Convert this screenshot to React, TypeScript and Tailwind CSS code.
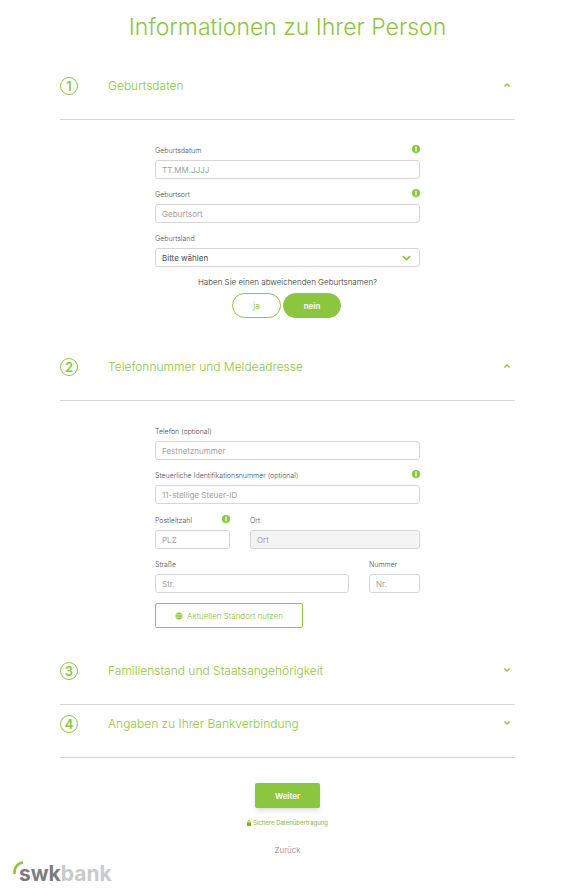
import { useState, type ReactNode } from "react";

interface StepProps {
  number: number;
  title: string;
  defaultOpen?: boolean;
  children?: ReactNode;
}

function Chevron({ up = false, className }: { up?: boolean; className?: string }) {
  return (
    <svg viewBox="0 0 8 6" fill="none" stroke="#8cc63f" className={className} aria-hidden="true">
      <path d={up ? "M1.3 4.4 4 1.9l2.7 2.5" : "M1.3 1.6 4 4.1l2.7-2.5"} strokeWidth="1.3" />
    </svg>
  );
}

function Step({ number, title, defaultOpen = false, children }: StepProps) {
  const [open, setOpen] = useState(defaultOpen);

  return (
    <section>
      <button
        type="button"
        aria-expanded={open}
        onClick={() => setOpen(!open)}
        className="flex w-full items-start border-b border-[#d6d6d6] pt-[10px] pb-6 text-left text-[#8cc63f]"
      >
        <span className="flex size-[18px] shrink-0 items-center justify-center rounded-full border border-[#8cc63f] text-[13px] leading-4 font-semibold">
          {number}
        </span>
        <span className="ml-[30px] flex-1 text-[12px] leading-[17px] font-light">{title}</span>
        <Chevron up={open} className="mt-[5px] mr-1 h-[6px] w-2" />
      </button>
      {open && children}
    </section>
  );
}

function InfoButton() {
  return (
    <button type="button" aria-label="Info" className="size-2 rounded-full shadow-sm">
      <svg viewBox="0 0 8 8" className="size-2">
        <circle cx="4" cy="4" r="4" fill="#8cc63f" />
        <path d="M4 1.5v5" stroke="#fff" strokeWidth="1.2" />
      </svg>
    </button>
  );
}

interface FieldProps {
  id: string;
  label: string;
  placeholder?: string;
  info?: boolean;
  disabled?: boolean;
  children?: ReactNode;
}

function Field({ id, label, placeholder, info, disabled, children }: FieldProps) {
  return (
    <div className="min-w-0">
      <div className="mb-1 flex h-[11px] items-start justify-between">
        <label htmlFor={id} className="text-[7px] leading-[11px] font-light whitespace-nowrap text-[#4f4f5a]">
          {label}
        </label>
        {info && <InfoButton />}
      </div>
      {children ?? (
        <input
          id={id}
          type="text"
          placeholder={placeholder}
          disabled={disabled}
          className="block h-[19px] w-full rounded-[3px] border border-[#d6d6d6] bg-white px-[6px] text-[8px] text-[#4a4a4a] placeholder:text-[#a0a0a0] disabled:bg-[#f4f4f4]"
        />
      )}
    </div>
  );
}

function Logo() {
  return (
    <a href="#" aria-label="swkbank" className="relative inline-block pt-px pl-[6px] text-[21px] leading-6 font-bold">
      <svg viewBox="0 0 12 14" className="absolute top-0 left-0 h-[14px] w-3" fill="none" aria-hidden="true">
        <path d="M1.5 13C1 6.500 4.500 2 10 1.500" stroke="#8cc63f" strokeWidth="2.600" />
      </svg>
      <span className="text-[#7b7d80]">swk</span>
      <span className="text-[#c9cacc]">bank</span>
    </a>
  );
}

export default function App() {
  const [otherName, setOtherName] = useState(false);

  return (
    <main className="min-h-screen bg-white font-['Inter',sans-serif]">
      <form className="pt-3 pr-[46px] pl-[60px]" onSubmit={(e) => e.preventDefault()}>
        <h1 className="mb-6 text-center text-[23px] leading-[31px] font-light text-[#8cc63f]">
          Informationen zu Ihrer Person
        </h1>

        <Step number={1} title="Geburtsdaten" defaultOpen>
          <div className="mx-auto flex max-w-[265px] flex-col gap-[10px] pt-[25px] pb-[30px]">
            <Field id="geburtsdatum" label="Geburtsdatum" placeholder="TT.MM.JJJJ" info />
            <Field id="geburtsort" label="Geburtsort" placeholder="Geburtsort" info />
            <Field id="geburtsland" label="Geburtsland">
              <div className="relative">
                <select
                  id="geburtsland"
                  className="block h-[19px] w-full appearance-none rounded-[3px] border border-[#d6d6d6] bg-white px-[6px] text-[8px] text-[#4a4a4a]"
                >
                  <option>Bitte wählen</option>
                </select>
                <Chevron className="pointer-events-none absolute top-[6px] right-[8px] h-[8px] w-[11px]" />
              </div>
            </Field>
            <fieldset className="text-center text-[8px]">
              <legend className="mx-auto mb-[5px] leading-[11px] font-light text-[#2f2f2f]">
                Haben Sie einen abweichenden Geburtsnamen?
              </legend>
              <div className="flex justify-center gap-[2px] pr-[2px]">
                <button
                  type="button"
                  aria-pressed={otherName}
                  onClick={() => setOtherName(true)}
                  className="h-[25px] w-[49px] rounded-full border border-[#8cc63f] text-[#8cc63f] aria-pressed:bg-[#8cc63f] aria-pressed:font-semibold aria-pressed:text-white"
                >
                  ja
                </button>
                <button
                  type="button"
                  aria-pressed={!otherName}
                  onClick={() => setOtherName(false)}
                  className="h-[25px] w-[58px] rounded-full border border-[#8cc63f] text-[#8cc63f] aria-pressed:bg-[#8cc63f] aria-pressed:font-semibold aria-pressed:text-white"
                >
                  nein
                </button>
              </div>
            </fieldset>
          </div>
        </Step>

        <Step number={2} title="Telefonnummer und Meldeadresse" defaultOpen>
          <div className="mx-auto flex max-w-[265px] flex-col gap-[11px] pt-[25px] pb-6">
            <div className="flex flex-col gap-[10px]">
              <Field id="telefon" label="Telefon (optional)" placeholder="Festnetznummer" />
              <Field
                id="steuer-id"
                label="Steuerliche Identifikationsnummer (optional)"
                placeholder="11-stellige Steuer-ID"
                info
              />
            </div>
            <div className="flex flex-col gap-[10px]">
              <div className="grid grid-cols-[75px_1fr] gap-5">
                <Field id="plz" label="Postleitzahl" placeholder="PLZ" info />
                <Field id="ort" label="Ort" placeholder="Ort" disabled />
              </div>
              <div className="grid grid-cols-[1fr_51px] gap-5">
                <Field id="strasse" label="Straße" placeholder="Str." />
                <Field id="nummer" label="Nummer" placeholder="Nr." />
              </div>
              <button
                type="button"
                className="flex h-[25px] w-[148px] items-center justify-center gap-1 rounded-[2px] border border-[#8cc63f] text-[8px] font-light text-[#7fbf2a]"
              >
                <svg viewBox="0 0 8 8" className="size-2" aria-hidden="true">
                  <circle cx="4" cy="4" r="3.500" fill="#8cc63f" />
                  <path d="M.5 2.800h7M.5 5.200h7" stroke="#fff" strokeWidth=".6" />
                </svg>
                Aktuellen Standort nutzen
              </button>
            </div>
          </div>
        </Step>

        <Step number={3} title="Familienstand und Staatsangehörigkeit" />
        <Step number={4} title="Angaben zu Ihrer Bankverbindung" />

        <div className="flex flex-col items-center pt-[25px]">
          <button
            type="submit"
            className="h-[25px] w-[65px] rounded-[2px] bg-[#8cc63f] text-[8px] font-semibold text-white shadow-md"
          >
            Weiter
          </button>
          <p className="mt-[10px] flex items-center gap-[2px] text-[6px] leading-[10px] text-[#8cb03f]">
            <svg viewBox="0 0 4 6" className="h-[6px] w-1" aria-hidden="true">
              <path d="M1 3V1.500a1 1 0 0 1 2 0V3" fill="none" stroke="#7ab51d" strokeWidth=".8" />
              <path d="M0 2.500h4V6H0z" fill="#7ab51d" />
            </svg>
            Sichere Datenübertragung
          </p>
          <a href="#" className="mt-[17px] text-[8px] leading-[11px] font-light text-[#808080]">
            Zurück
          </a>
        </div>
      </form>
      <footer className="pt-[5px] pl-[13px]">
        <Logo />
      </footer>
    </main>
  );
}
